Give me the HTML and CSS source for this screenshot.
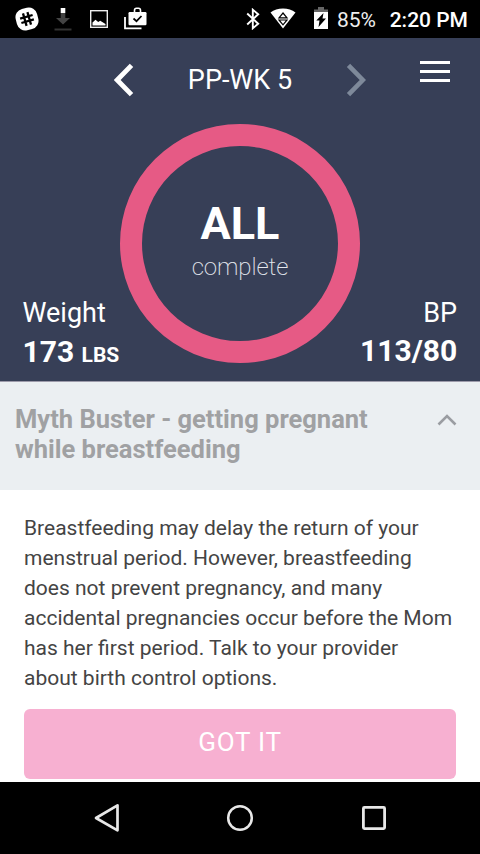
FILE: index.html
```
<!DOCTYPE html>
<html lang="en">
<head>
  <meta charset="UTF-8" />
  <meta name="viewport" content="width=device-width, initial-scale=1.0"/>
  <title>PP-WK 5</title>
  <link rel="stylesheet" href="styles.css">
</head>
<body>
  <div class="status-bar">
    <svg class="icon-slack" width="24" height="24" viewBox="0 0 24 24">
      <rect x="1" y="1" width="22" height="22" rx="8.5" fill="#fff" transform="rotate(-14 12 12)"/>
      <path d="M9.700 5.500v13M14.300 5.500v13M5.500 9.700h13M5.500 14.300h13" stroke="#000" stroke-width="2.300" transform="rotate(-16 12 12)"/>
    </svg>
    <svg class="icon-download" width="18" height="24" viewBox="0 0 18 24">
      <path d="M6.700 6h4.600v5H16l-7 6.500L2 11h4.700z" fill="#444"/>
      <path d="M6.700 1h4.600v5H6.700z" fill="#fff"/>
      <path d="M.5 21.500h17v2H.5z" fill="#333"/>
    </svg>
    <svg class="icon-image" width="18" height="18" viewBox="0 0 18 18">
      <rect x=".7" y=".7" width="16.600" height="16.600" fill="none" stroke="#eee" stroke-width="1.400"/>
      <path d="M2.500 15.500v-3l3-2.800 2.700 2.300 2-1.300 5.300 3.300v1.500z" fill="#fff"/>
    </svg>
    <svg class="icon-work" width="23" height="23" viewBox="0 0 23 23">
      <path d="M1 10v11.300h16.500" fill="none" stroke="#fff" stroke-width="1.800"/>
      <path d="M10.500 6V3.500c0-1.500.8-2.200 2-2.200h2c1.200 0 2 .7 2 2.200V6" fill="none" stroke="#fff" stroke-width="1.600"/>
      <rect x="4.500" y="5" width="18" height="13.300" rx="1.200" fill="#fff"/>
      <path d="M9.500 11.500l3 2.700 5-5.200" fill="none" stroke="#000" stroke-width="1.700"/>
    </svg>
    <svg class="icon-bluetooth" width="14" height="22" viewBox="0 0 14 22">
      <path d="M1.200 5.500l11 10.300-5.400 4.500V1.700l5.400 4.500-11 10.300" fill="none" stroke="#fff" stroke-width="1.900"/>
    </svg>
    <svg class="icon-wifi" width="26" height="21" viewBox="0 0 26 21">
      <path d="M.5 4.500C4 1.700 8 .5 13 .5s9 1.200 12.500 4L13 20.500z" fill="#fff"/>
      <path d="M13 5l4 4.900H9zM9 12h8l-4 4.900z" fill="#fff" stroke="#000" stroke-width="1.200"/>
    </svg>
    <svg class="icon-battery" width="14" height="22" viewBox="0 0 14 22">
      <path d="M4 0h6v2.500h4V5H0V2.500h4z" fill="#666"/>
      <path d="M0 5h14v17H0z" fill="#fff"/>
      <path d="M9.500 6l-1 5.500H12L4.500 20l1-6.500H2.300z" fill="#000"/>
    </svg>
    <span class="battery-level">85%</span>
    <span class="clock">2:20 PM</span>
  </div>

  <div class="header">
    <div class="week-nav">
      <svg class="arrow" width="20" height="34" viewBox="0 0 20 34">
        <path d="M17.500 2.300L3.200 17l14.300 14.700" fill="none" stroke="#fff" stroke-width="4.800"/>
      </svg>
      <div class="week-title">PP-WK 5</div>
      <svg class="arrow" width="20" height="34" viewBox="0 0 20 34">
        <path d="M2.500 2.300L16.800 17 2.500 31.700" fill="none" stroke="#7e899a" stroke-width="4.600"/>
      </svg>
      <div class="menu">
        <span></span>
        <span></span>
        <span></span>
      </div>
    </div>

    <div class="summary">
      <div class="stat">
        <div class="stat-label">Weight</div>
        <div class="stat-value">173 <small>LBS</small></div>
      </div>
      <div class="ring">
        <div class="ring-value">ALL</div>
        <div class="ring-label">complete</div>
      </div>
      <div class="stat stat-right">
        <div class="stat-label">BP</div>
        <div class="stat-value">113/80</div>
      </div>
    </div>
  </div>

  <div class="card-header">
    <div class="card-title">Myth Buster - getting pregnant<br>while breastfeeding</div>
    <svg class="chevron" width="20" height="12" viewBox="0 0 20 12">
      <path d="M1.500 10.500L10 2l8.500 8.500" fill="none" stroke="#9a9da2" stroke-width="2.600"/>
    </svg>
  </div>

  <div class="card-body">
    <p>Breastfeeding may delay the return of your<br>menstrual period. However, breastfeeding<br>does not prevent pregnancy, and many<br>accidental pregnancies occur before the Mom<br>has her first period. Talk to your provider<br>about birth control options.</p>
    <button class="got-it">GOT IT</button>
  </div>

  <div class="nav-bar">
    <svg width="28" height="30" viewBox="0 0 28 30">
      <path d="M25.500 2.300v25L4 15z" fill="none" stroke="#e8e8e8" stroke-width="2.700" stroke-linejoin="round"/>
    </svg>
    <svg width="28" height="30" viewBox="0 0 28 30">
      <circle cx="14" cy="15" r="11.800" fill="none" stroke="#e8e8e8" stroke-width="2.500"/>
    </svg>
    <svg width="28" height="30" viewBox="0 0 28 30">
      <rect x="3.400" y="4.400" width="21.200" height="21.200" rx="1" fill="none" stroke="#e8e8e8" stroke-width="2.800"/>
    </svg>
  </div>
</body>
</html>
```
FILE: styles.css
```
* {
  box-sizing: border-box;
}

body {
  margin: 0;
  width: 480px;
  height: 854px;
  font-family: Roboto, sans-serif;
  background-color: #fff;
  display: flex;
  flex-direction: column;
  overflow: hidden;
}

svg {
  display: block;
  flex-shrink: 0;
}

/* Status bar */
.status-bar {
  height: 38px;
  background-color: #000;
  color: #fff;
  display: flex;
  align-items: center;
  padding: 0 12px 0 15px;
  font-size: 21px;
}

.icon-download {
  margin-left: 15px;
}

.icon-image {
  margin-left: 18px;
}

.icon-work {
  margin-left: 16px;
  margin-bottom: 2px;
}

.icon-bluetooth {
  margin-left: 99px;
}

.icon-wifi {
  margin-left: 10px;
  margin-bottom: 2px;
}

.icon-battery {
  margin-left: 18px;
  margin-bottom: 2px;
}

.battery-level {
  margin: 2px 0 0 9px;
  color: #eee;
}

.clock {
  margin: 2px 0 0 auto;
  font-weight: 500;
}

/* Header */
.header {
  height: 344px;
  background-color: #373f57;
  border-bottom: 1px solid #9d9bab;
  color: #fff;
}

.week-nav {
  height: 85.5px;
  display: flex;
  align-items: flex-start;
  padding: 25px 30px 0 114px;
}

.week-title {
  width: 212px;
  font-size: 27px;
  line-height: 34px;
  text-align: center;
}

.menu {
  margin: -2px 0 0 auto;
  width: 30px;
  display: flex;
  flex-direction: column;
  gap: 6px;
}

.menu span {
  height: 3px;
  background-color: #fff;
}

.summary {
  display: grid;
  grid-template-columns: 120px 240px 120px;
}

.stat {
  padding: 170px 0 0 22.5px;
  white-space: nowrap;
}

.stat-label {
  height: 38px;
  font-size: 27px;
  line-height: 38px;
}

.stat-value {
  height: 36px;
  font-size: 30px;
  line-height: 40px;
  font-weight: bold;
}

.stat-value small {
  font-size: 21px;
  line-height: 1;
}

.stat-right {
  padding: 170px 23px 0 0;
  text-align: right;
}

.stat-right .stat-value {
  line-height: 38px;
}

.ring {
  height: 239.5px;
  border: 22.5px solid #e65a85;
  border-radius: 50%;
  display: flex;
  flex-direction: column;
  align-items: center;
  padding-top: 51px;
}

.ring-value {
  font-size: 45px;
  line-height: 53px;
  font-weight: bold;
}

.ring-label {
  font-size: 24px;
  line-height: 34px;
  font-weight: 200;
  letter-spacing: -0.1px;
  color: #e4e7ee;
}

/* Card */
.card-header {
  height: 107.5px;
  background-color: #ebeff2;
  display: flex;
  justify-content: space-between;
  padding: 22px 23px 0 15px;
}

.card-title {
  font-size: 25.5px;
  line-height: 30px;
  font-weight: bold;
  color: #a0a1a3;
  white-space: nowrap;
}

.chevron {
  margin-top: 10px;
}

.card-body {
  height: 292.5px;
  padding: 23.5px 24px 0;
}

.card-body p {
  margin: 0 0 16px;
  font-size: 21px;
  line-height: 30px;
  color: #444;
  white-space: nowrap;
}

.got-it {
  display: block;
  width: 100%;
  height: 70px;
  padding: 0 0 5px;
  border: none;
  border-radius: 6px;
  background-color: #f7b0d1;
  color: #fff;
  font-family: inherit;
  font-size: 26px;
  letter-spacing: 0.8px;
}

/* Android buttons */
.nav-bar {
  height: 72px;
  background-color: #000;
  display: flex;
  align-items: center;
  justify-content: space-between;
  padding: 0 92px;
}
```
